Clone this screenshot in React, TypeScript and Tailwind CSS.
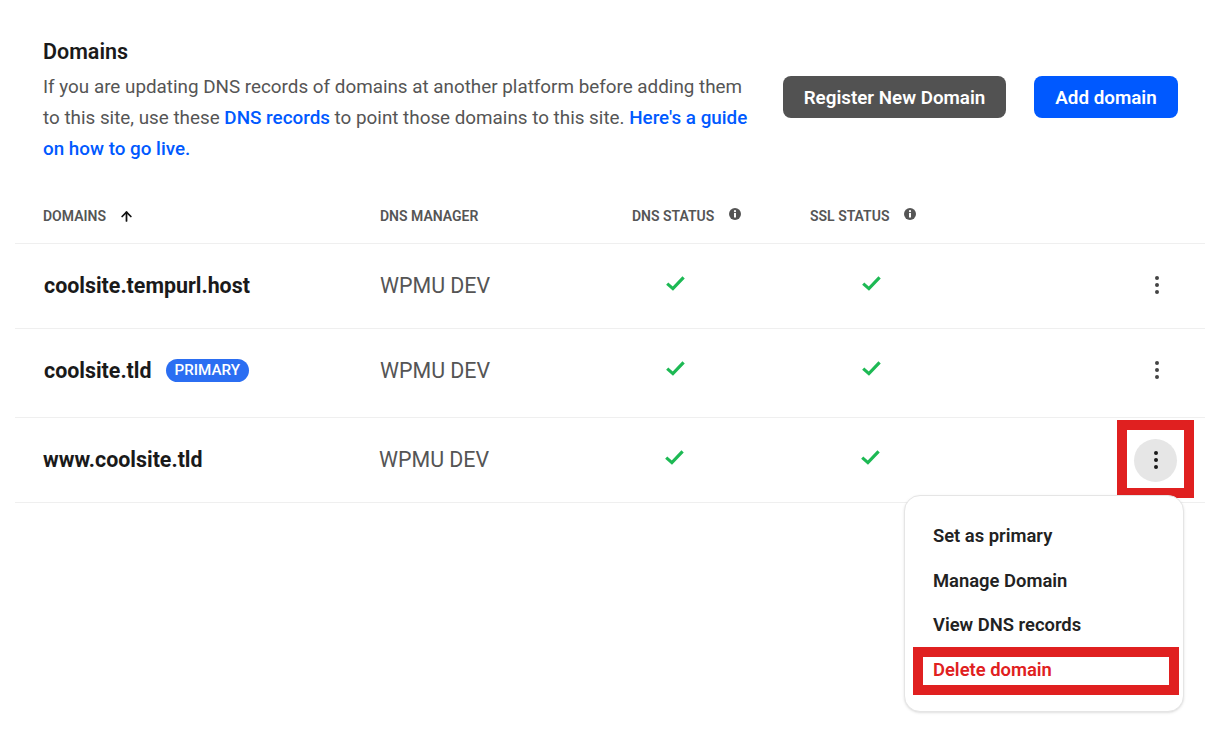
import { ArrowUp, EllipsisVertical } from "lucide-react";

const InfoIcon = () => (
  <svg viewBox="0 0 12 12" className="-mt-[4px] h-3 w-3">
    <circle cx="6" cy="6" r="6" fill="#555" />
    <rect x="5" y="5" width="2" height="4.5" fill="#fff" />
    <circle cx="6" cy="3.2" r="1.1" fill="#fff" />
  </svg>
);

const CheckIcon = () => (
  <svg viewBox="0 0 19 15" className="mb-[5px] h-[15px] w-[19px]">
    <polyline points="1.2,7.6 6.9,12.6 17.6,1.4" fill="none" stroke="#1db954" strokeWidth="3.2" />
  </svg>
);

const rows = [
  { name: "coolsite.tempurl.host", rowClass: "h-[85px] pl-[29px]" },
  { name: "coolsite.tld", primary: true, rowClass: "h-[89px] pl-[29px] pb-[4px]" },
  { name: "www.coolsite.tld", active: true, rowClass: "h-[85px] pl-[28px]" },
];

const RowMenuButton = ({ active }: { active?: boolean }) => (
  <button
    className={`flex h-[43px] w-[43px] items-center justify-center rounded-full ${
      active ? "bg-[#e6e6e6] text-[#1a1a1a]" : "mb-[2px] text-[#444]"
    }`}
  >
    <EllipsisVertical size={24} strokeWidth={2} />
  </button>
);

const App = () => {
  return (
    <div
      className="relative h-[750px] w-[1220px] overflow-hidden bg-white"
      style={{ fontFamily: "Roboto, sans-serif" }}
    >
      <div className="flex pl-[43px] pt-[40px]">
        <div className="w-[720px]">
          <h2 className="text-[21.5px] font-semibold leading-[24px] text-[#1a1a1a]">Domains</h2>
          <p className="mt-[8px] text-[18.83px] leading-[31px] text-[#555]">
            If you are updating DNS records of domains at another platform before adding them
            <br />
            to this site, use these{" "}
            <a className="font-medium text-[#0059ff]">DNS records</a> to point those domains to
            this site. <a className="font-medium text-[#0059ff]">Here's a guide</a>
            <br />
            <a className="font-medium text-[#0059ff]">on how to go live.</a>
          </p>
        </div>
        <div className="ml-[20px] mt-[36px] flex items-start gap-[28px]">
          <button className="h-[42px] w-[223px] rounded-[8px] bg-[#525252] pt-[2px] text-[18.8px] font-semibold text-white">
            Register New Domain
          </button>
          <button className="h-[42px] w-[144px] rounded-[8px] bg-[#0059ff] pt-[2px] text-[18.8px] font-semibold text-white">
            Add domain
          </button>
        </div>
      </div>

      <div className="mx-[15px] mt-[24px]">
        <div className="flex h-[55px] items-center border-b border-[#efefef] pl-[28px] text-[14px] font-semibold text-[#555]">
          <div className="flex w-[337px] items-center gap-[13px]">
            DOMAINS
            <ArrowUp size={15} strokeWidth={2.8} className="text-[#111]" />
          </div>
          <div className="w-[252px]">DNS MANAGER</div>
          <div className="flex w-[178px] items-center gap-[15px]">
            DNS STATUS
            <InfoIcon />
          </div>
          <div className="flex items-center gap-[15px]">
            SSL STATUS
            <InfoIcon />
          </div>
        </div>

        {rows.map((row) => (
          <div
            key={row.name}
            className={`flex items-center border-b border-[#efefef] ${row.rowClass}`}
          >
            <div className="flex w-[336px] items-center gap-[14px] text-[21.4px] font-bold text-[#1a1a1a]">
              {row.name}
              {row.primary && (
                <span className="rounded-full bg-[#2b6ef2] px-[9px] text-[15.2px] font-medium leading-[23px] text-white">
                  PRIMARY
                </span>
              )}
            </div>
            <div className="w-[253px] text-[21.4px] text-[#555]">WPMU DEV</div>
            <div className="w-[192px] pl-[33px]">
              <CheckIcon />
            </div>
            <div className="w-[310px] pl-[37px]">
              <CheckIcon />
            </div>
            <RowMenuButton active={row.active} />
          </div>
        ))}
      </div>

      <div className="absolute left-[1117px] top-[420px] h-[78px] w-[77px] border-[10px] border-[#e02020]" />

      <div className="absolute left-[904px] top-[495px] h-[217px] w-[280px] rounded-[16px] border border-[#e5e5e5] bg-white pl-[28px] pt-[26px] text-[18.4px] font-semibold text-[#222] shadow-sm">
        <div className="leading-[27px]">Set as primary</div>
        <div className="mt-[18px] leading-[27px]">Manage Domain</div>
        <div className="mt-[17px] leading-[27px]">View DNS records</div>
        <div className="mt-[18px] leading-[27px] text-[#e02020]">Delete domain</div>
      </div>

      <div className="absolute left-[913px] top-[647px] h-[48px] w-[266px] border-[10px] border-[#e02020]" />
    </div>
  );
};

export default App;
